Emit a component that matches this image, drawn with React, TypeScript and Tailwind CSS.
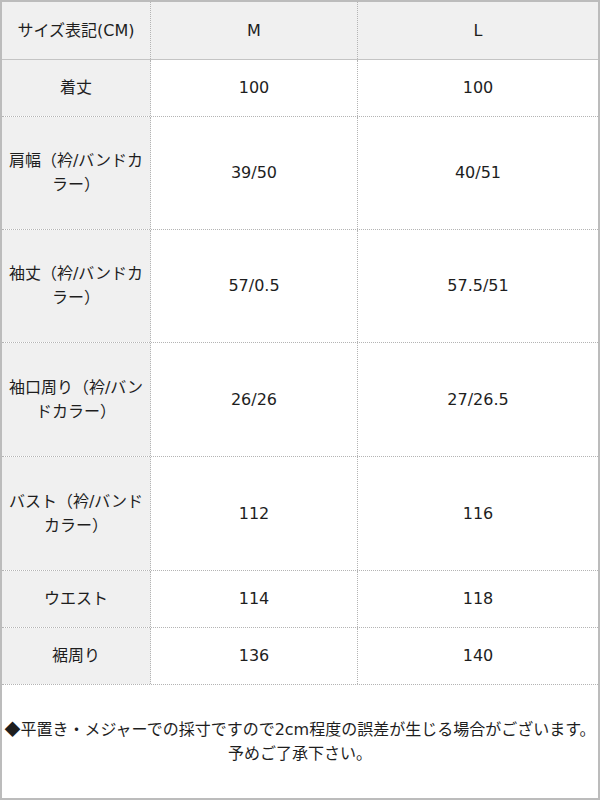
import React from "react";

type Row = { label: React.ReactNode; m: string; l: string; h: string };

const rows: Row[] = [
  { label: "着丈", m: "100", l: "100", h: "h-[57px]" },
  {
    label: (
      <>
        肩幅（衿/バンドカ
        <br />
        ラー）
      </>
    ),
    m: "39/50",
    l: "40/51",
    h: "h-[113px]",
  },
  {
    label: (
      <>
        袖丈（衿/バンドカ
        <br />
        ラー）
      </>
    ),
    m: "57/0.5",
    l: "57.5/51",
    h: "h-[113px]",
  },
  {
    label: (
      <>
        袖口周り（衿/バン
        <br />
        ドカラー）
      </>
    ),
    m: "26/26",
    l: "27/26.5",
    h: "h-[114px]",
  },
  {
    label: (
      <>
        バスト（衿/バンド
        <br />
        カラー）
      </>
    ),
    m: "112",
    l: "116",
    h: "h-[114px]",
  },
  { label: "ウエスト", m: "114", l: "118", h: "h-[57px]" },
  { label: "裾周り", m: "136", l: "140", h: "h-[57px]" },
];

export default function App() {
  return (
    <div
      className="w-[600px] h-[800px] border-2 border-[#bcbcbc] bg-white flex flex-col text-[16px] leading-[24px] text-[#1e1e1e]"
      style={{ fontFamily: '"DejaVu Sans", "Noto Sans CJK JP", sans-serif' }}
    >
      {/* header */}
      <div className="flex h-[58px] shrink-0 bg-[#f0f0f0] border-b border-solid border-[#c4c4c4]">
        <div className="w-[149px] shrink-0 flex items-center justify-center text-center border-r border-dotted border-[#b4b4b4]">
          サイズ表記(CM)
        </div>
        <div className="w-[207px] shrink-0 flex items-center justify-center border-r border-dotted border-[#b4b4b4]">
          M
        </div>
        <div className="flex-1 flex items-center justify-center">L</div>
      </div>
      {rows.map((r, i) => (
        <div
          key={i}
          className={`flex ${r.h} shrink-0 border-b border-dotted border-[#b4b4b4]`}
        >
          <div className="w-[149px] shrink-0 bg-[#f0f0f0] flex items-center justify-center text-center px-1 border-r border-dotted border-[#b4b4b4]">
            <span>{r.label}</span>
          </div>
          <div className="w-[207px] shrink-0 flex items-center justify-center border-r border-dotted border-[#b4b4b4]">
            {r.m}
          </div>
          <div className="flex-1 flex items-center justify-center">{r.l}</div>
        </div>
      ))}
      <div className="flex-1 flex flex-col items-center justify-center text-center pb-[1px]">
        <div className="whitespace-nowrap">
          <span style={{ fontFamily: '"Noto Sans CJK JP", sans-serif' }}>◆</span>
          平置き・メジャーでの採寸ですので2cm程度の誤差が生じる場合がございます。
        </div>
        <div className="whitespace-nowrap">予めご了承下さい。</div>
      </div>
    </div>
  );
}
